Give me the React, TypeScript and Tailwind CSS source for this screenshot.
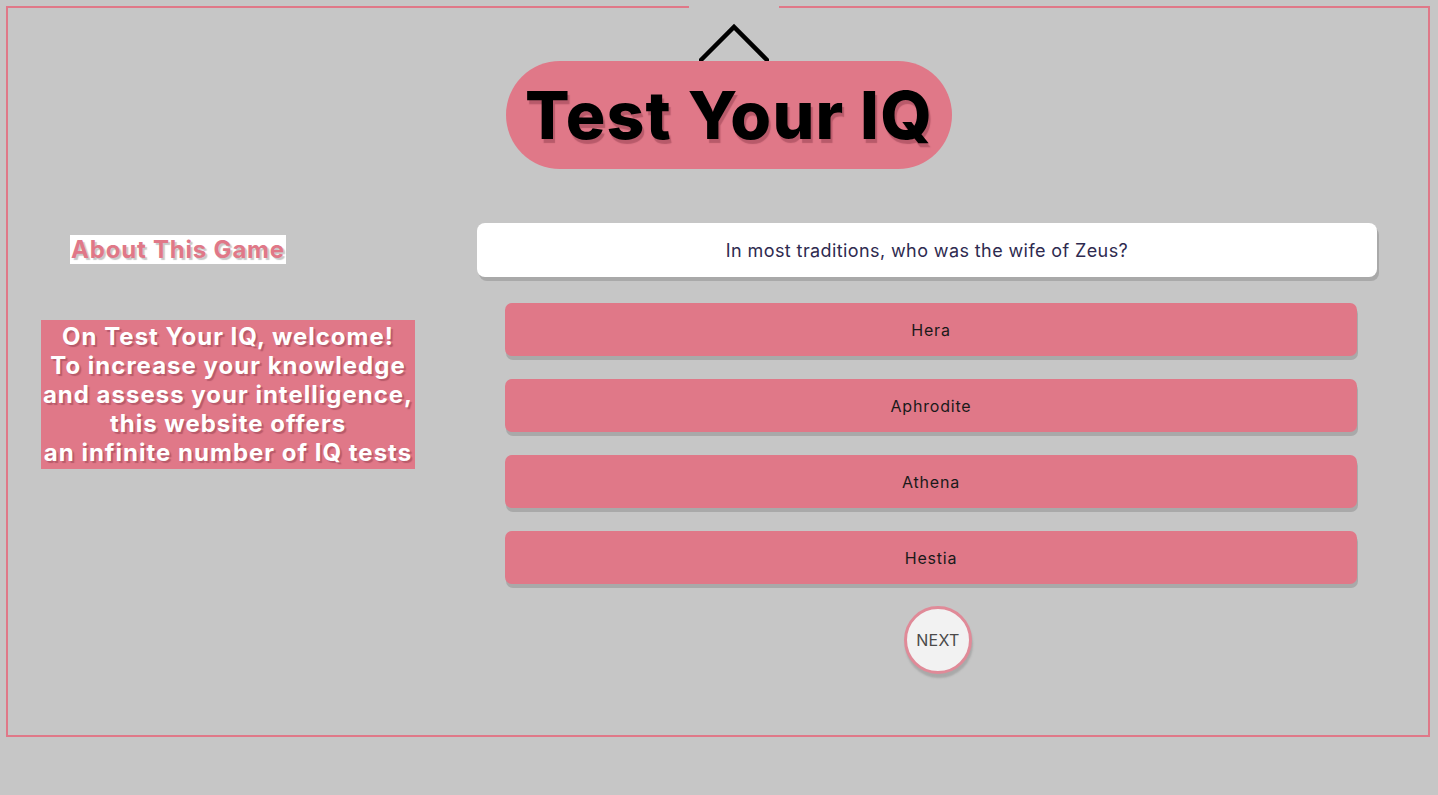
const answers = ["Hera", "Aphrodite", "Athena", "Hestia"];

const Chevron = () => (
  <svg width="70" height="40" viewBox="0 0 70 40" fill="none">
    <path d="M2 37 L35 4 L68 37" stroke="#000" strokeWidth="4.5" strokeLinecap="round" strokeLinejoin="miter" />
  </svg>
);

export default function App() {
  return (
    <div className="min-h-[795px] bg-[#c6c6c6] pt-[6px] font-['Inter','Liberation_Sans',sans-serif]">
      <div className="relative ml-[6px] h-[731px] w-[1424px] border-2 border-[#e07888]">
        {/* gap in the top border with the arrow */}
        <div className="absolute left-[681px] top-[-2px] flex h-[50px] w-[90px] justify-center bg-[#c6c6c6] pt-[17px]">
          <Chevron />
        </div>

        <div className="flex justify-center pl-[22px] pt-[53px]">
          <div className="relative flex h-[108px] w-[446px] items-center justify-center rounded-full bg-[#e07888]">
            <h1 className="text-[66px] font-extrabold leading-none tracking-[1.2px] text-black [text-shadow:2px_4px_1px_#b85a6a]">
              Test Your IQ
            </h1>
          </div>
        </div>

        <div className="mt-[54px] flex">
          {/* left column */}
          <div className="w-[469px] shrink-0">
            <div className="ml-[62px] mt-[12px] inline-block bg-white px-[1px] text-[24px] font-bold leading-[29px] tracking-[0.8px] text-[#e07888] [text-shadow:2px_2px_1px_#c8c8c8]">
              About This Game
            </div>
            <div className="ml-[33px] mt-[56px] w-[374px] bg-[#e07888] py-[2px] text-center text-[24px] font-bold leading-[29px] tracking-[1px] text-white [text-shadow:2px_2px_1px_#b85a6a]">
              On Test Your IQ, welcome!
              <br />
              To increase your knowledge
              <br />
              and assess your intelligence,
              <br />
              this website offers
              <br />
              an infinite number of IQ tests
            </div>
          </div>

          {/* quiz column */}
          <div className="flex w-[900px] flex-col items-center">
            <div className="flex h-[54px] w-[900px] items-center justify-center rounded-[8px] bg-white text-[18px] tracking-[0.4px] text-[#2e2a4f] shadow-[2px_4px_0_#a9a9a9]">
              In most traditions, who was the wife of Zeus?
            </div>
            <div className="ml-[8px] mt-[26px] flex flex-col gap-[23px]">
              {answers.map((a) => (
                <button
                  key={a}
                  className="flex h-[53px] w-[852px] items-center justify-center rounded-[7px] bg-[#e07888] text-[16px] tracking-[0.8px] text-[#1a1a1a] shadow-[1px_4px_0_#a9a9a9]"
                >
                  {a}
                </button>
              ))}
            </div>
            <button className="ml-[22px] mt-[22px] flex h-[68px] w-[68px] items-center justify-center rounded-full border-[3px] border-[#e08a98] bg-[#f2f2f2] text-[16px] tracking-[0.3px] text-[#4a4a4a] shadow-[1px_4px_2px_#a9a9a9]">
              NEXT
            </button>
          </div>
        </div>
      </div>
    </div>
  );
}
